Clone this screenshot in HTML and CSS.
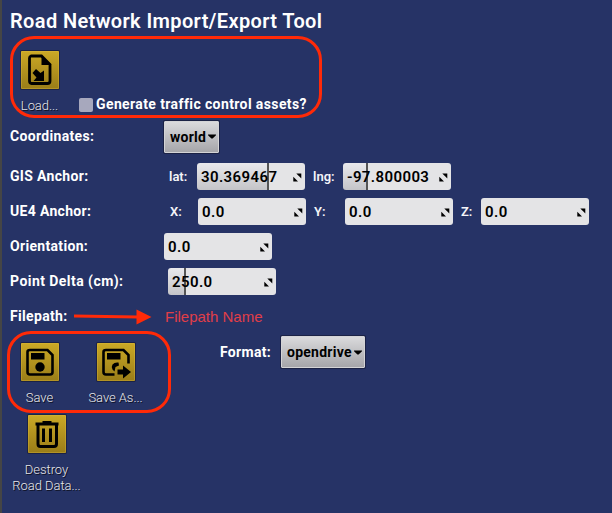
FILE: index.html
```html
<!DOCTYPE html>
<html lang="en">
<head>
<meta charset="utf-8">
<title>Road Network Import/Export Tool</title>
<link rel="stylesheet" href="styles.css">
</head>
<body>
<svg class="defs" width="0" height="0">
  <symbol id="spin" viewBox="0 0 9 9"><path d="M3.3 0.5H8.3V5.5L6.9 4.1 5.3 2.5ZM0.3 3.8 5 8.5H0.3Z"/></symbol>
  <symbol id="caret" viewBox="0 0 8 5"><path d="M0 0.4H8V1.2L4.6 4.4H3.4L0 1.2Z"/></symbol>
</svg>
<main class="panel">
  <h1 class="title"><span>Road Network Import/Export Tool</span></h1>

  <section class="group group-load">
    <div class="tool">
      <button class="tile"><svg width="38" height="38" viewBox="0 0 38 38"><path d="M10 5H20.5L29 13.5V30Q29 32.5 26.5 32.5H10.500Q8.500 32.500 8.500 30V7Q8.500 5.500 10 5Z" fill="none" stroke="#000" stroke-width="2.800"/><path d="M20.500 4 30.500 14H20.500ZM15 18 19.500 22 23 19.500V30H12.500L15.500 26.500 11.500 22Z"/></svg></button>
      <span class="caption">Load...</span>
    </div>
    <label class="check"><span class="box"></span><span class="check-text">Generate traffic control assets?</span></label>
  </section>

  <div class="row coordinates"><span class="label l-coord">Coordinates:</span>
    <button class="select world"><span>world</span><svg width="8" height="5"><use href="#caret"/></svg></button></div>

  <div class="row"><span class="label l-gis">GIS Anchor:</span>
    <span class="axis lat">lat:</span><span class="field fill-lat"><span class="num">30.369467</span><svg width="9" height="9"><use href="#spin"/></svg></span>
    <span class="axis lng">lng:</span><span class="field fill-lng"><span class="num">-97.800003</span><svg width="9" height="9"><use href="#spin"/></svg></span></div>

  <div class="row"><span class="label l-ue">UE4 Anchor:</span>
    <span class="axis x">X:</span><span class="field"><span class="num">0.0</span><svg width="9" height="9"><use href="#spin"/></svg></span>
    <span class="axis y">Y:</span><span class="field"><span class="num">0.0</span><svg width="9" height="9"><use href="#spin"/></svg></span>
    <span class="axis z">Z:</span><span class="field"><span class="num">0.0</span><svg width="9" height="9"><use href="#spin"/></svg></span></div>

  <div class="row"><span class="label l-or">Orientation:</span>
    <span class="field"><span class="num">0.0</span><svg width="9" height="9"><use href="#spin"/></svg></span></div>

  <div class="row"><span class="label l-delta">Point Delta (cm):</span>
    <span class="field fill-delta"><span class="num">250.0</span><svg width="9" height="9"><use href="#spin"/></svg></span></div>

  <div class="row filepath"><span class="label l-file">Filepath:</span>
    <svg class="arrow" width="78" height="16" viewBox="0 0 78 16"><path d="M0 7 64 8" stroke="#ff2a08" stroke-width="2.800"/><path d="M62.500 0.500 77.500 8 62.500 15.500Z" fill="#ff2a08"/></svg>
    <span class="path-name">Filepath Name</span></div>

  <div class="row save-row">
    <section class="group group-save">
      <div class="tool">
        <button class="tile"><svg width="38" height="38" viewBox="0 0 38 38"><path d="M9 7H26.500L31.500 12V29Q31.500 31.500 29 31.500H9Q6.500 31.500 6.500 29V9Q6.500 7 9 7Z" fill="none" stroke="#000" stroke-width="2.600"/><path d="M10 10H23.500V16.500H10Z"/><circle cx="19" cy="24" r="4.700"/></svg></button>
        <span class="caption">Save</span>
      </div>
      <div class="tool">
        <button class="tile"><svg width="38" height="38" viewBox="0 0 38 38"><path d="M17.500 31.500H9Q6.500 31.500 6.500 29V9Q6.500 7 9 7H26.500L31.500 12V20.500" fill="none" stroke="#000" stroke-width="2.600"/><path d="M10 10H23.500V16.500H10ZM21.500 19.500Q17.500 19 15.500 21.500 14 24 15.500 26.500L17.500 28.500 18.500 24 22 22.500ZM20.500 26.500H26V22.500L34 29 26 35.500V31.500H20.500Z"/></svg></button>
        <span class="caption">Save As...</span>
      </div>
    </section>
    <div class="format"><span class="label l-format">Format:</span>
      <button class="select drive"><span>opendrive</span><svg width="8" height="5"><use href="#caret"/></svg></button></div>
  </div>

  <div class="tool destroy">
    <button class="tile"><svg width="38" height="38" viewBox="0 0 38 38"><path d="M14.500 6H23.500V7.500H30.500V10.500H7.500V7.500H14.500Z"/><path d="M10 10V29Q10 31.500 12.500 31.500H26Q28.500 31.500 28.500 29V10" fill="none" stroke="#000" stroke-width="3"/><path d="M14 13.500H17V27H14ZM21 13.500H24V27H21Z"/></svg></button>
    <span class="caption">Destroy<br>Road Data...</span>
  </div>
</main>
</body>
</html>
```
FILE: styles.css
```css
* { box-sizing: border-box; }
body { margin: 0; width: 612px; height: 513px; overflow: hidden; background: #263366; color: #fff; font-family: Roboto, sans-serif; }
.defs { display: block; }
.panel { height: 513px; border-left: 2px solid #454545; padding-left: 8px; }
.title { margin: 0; height: 36px; padding-top: 9px; font-size: 20px; line-height: 24px; font-weight: 600; letter-spacing: .38px; white-space: nowrap; }

.group { display: flex; border: 3px solid #ff2a08; border-radius: 24px; }
.group-load { width: 312px; height: 82px; }
.tool { display: flex; flex-direction: column; align-items: center; }
.tile { display: block; width: 38px; height: 38px; padding: 0; border: 0; border-radius: 1px; background: linear-gradient(#cba926, #9a7d18); box-shadow: 0 0 0 1px #1b2245, inset 0 0 0 1px rgba(225, 190, 60, .35); }
.tile svg { display: block; }
.caption { margin-top: 9px; font-size: 13px; line-height: 16px; font-weight: 300; letter-spacing: -.05px; color: #e6e6ea; text-align: center; white-space: nowrap; text-shadow: 1px 1px 0 #0c0f1e; }
.group-load .tool { width: 54px; padding-top: 12px; }
.group-load .caption { margin-top: 9px; margin-left: -1px; }
.check { display: flex; align-items: center; height: 18px; margin: 56px 0 0 12px; }
.box { width: 14px; height: 14px; margin-top: 2px; border-radius: 2px; background: #a7a8bd; }
.check-text { margin-left: 3px; font-size: 14px; font-weight: 700; letter-spacing: .39px; white-space: nowrap; }

.row { display: flex; align-items: center; height: 27px; margin-bottom: 8px; }
.label { width: 154px; font-size: 14px; line-height: 18px; font-weight: 700; letter-spacing: .32px; margin-bottom: 2px; white-space: nowrap; }
.l-delta { letter-spacing: .45px; }
.coordinates { height: 33px; margin: 2px 0 10px; }
.select { display: flex; align-items: center; justify-content: space-between; height: 32px; padding: 0 2px 0 5px; border: 1px solid #d4d4d6; border-radius: 1px; background: linear-gradient(#dadadc, #a6a6aa); color: #000; font: 700 14px/18px Roboto, sans-serif; letter-spacing: .26px; box-shadow: 0 0 0 1px #1b2245; }
.select svg { flex: none; }
.world { width: 55px; }
.drive { width: 84px; }
.axis { font-size: 13px; line-height: 16px; font-weight: 600; color: #f4f4f8; }
.lat { width: 28px; margin-left: 5px; }
.lng { width: 30px; margin-left: 8px; }
.x { width: 28px; margin-left: 6px; }
.y { width: 31px; margin-left: 8px; }
.z { width: 20px; margin-left: 8px; }
.field { display: flex; align-items: center; justify-content: space-between; width: 108px; height: 27px; padding: 0 3px 0 4px; border-radius: 3px; background: #e4e4e6; color: #000; }
.field svg { margin-top: 1px; }
.num { font-size: 15px; line-height: 18px; font-weight: 600; letter-spacing: .4px; }
.fill-lat { background: linear-gradient(90deg, transparent 70px, #555 70px 71.5px, #e4e4e6 72px), linear-gradient(#e9e9ec, #c4c4c8); }
.fill-lng { background: linear-gradient(90deg, transparent 23px, #555 23px 24.5px, #e4e4e6 25px), linear-gradient(#e9e9ec, #c4c4c8); }
.fill-delta { margin-left: 4px; background: linear-gradient(90deg, transparent 16px, #555 16px 17.5px, #e4e4e6 18px), linear-gradient(#e9e9ec, #c4c4c8); }

.filepath { height: 28px; margin: 0; padding-bottom: 1px; }
.l-file { width: 64px; }
.path-name { margin-left: 13px; color: #e03e48; font-size: 15px; line-height: 18px; font-family: "Liberation Sans", sans-serif; }
.save-row { height: 82px; margin: 0; align-items: flex-start; }
.group-save { width: 164px; height: 82px; margin: 0 0 0 -3px; }
.group-save .tool { width: 76px; flex: none; padding-top: 9px; margin-left: -8px; }
.group-save .tool + .tool { margin-left: 0; }
.group-save .caption { margin-left: -1px; }
.format { display: flex; align-items: center; margin: 5px 0 0 49px; }
.l-format { width: 61px; margin-bottom: 0; }
.destroy { width: 74px; margin-top: 2px; }
.destroy .caption { margin-top: 9px; margin-left: -1px; }
```
